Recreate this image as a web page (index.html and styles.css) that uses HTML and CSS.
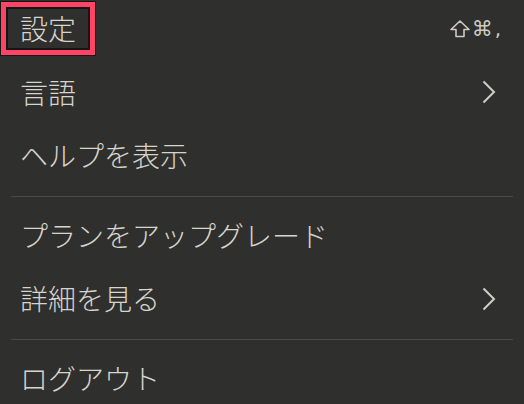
FILE: index.html
```html
<!DOCTYPE html>
<html lang="ja">
<head>
  <meta charset="UTF-8" />
  <title>メニュー</title>
  <link rel="stylesheet" href="styles.css">
</head>
<body>
  <ul class="menu">
    <li class="item">
      <span class="label focused">設定</span>
      <span class="shortcut">
        <svg class="shift" width="20" height="18" viewBox="0 0 20 18"><path d="M10 1 L19 9.5 L14 9.5 L14 16.5 L6 16.5 L6 9.5 L1 9.5 Z" fill="none" stroke="#cdcbc4" stroke-width="1.6" stroke-linejoin="round"/></svg>
        <span class="cmd">⌘</span><span class="comma">,</span>
      </span>
    </li>
    <li class="item">
      <span class="label">言語</span>
      <svg class="chevron" width="14" height="24" viewBox="0 0 14 24"><path d="M1.5 1.5 L12 12 L1.5 22.5" fill="none" stroke="#cfcdc6" stroke-width="2"/></svg>
    </li>
    <li class="item">
      <span class="label">ヘルプを表示</span>
    </li>
    <li class="divider"></li>
    <li class="item">
      <span class="label">プランをアップグレード</span>
    </li>
    <li class="item">
      <span class="label">詳細を見る</span>
      <svg class="chevron" width="14" height="24" viewBox="0 0 14 24"><path d="M1.5 1.5 L12 12 L1.5 22.5" fill="none" stroke="#cfcdc6" stroke-width="2"/></svg>
    </li>
    <li class="divider"></li>
    <li class="item">
      <span class="label">ログアウト</span>
    </li>
  </ul>
</body>
</html>
```

FILE: styles.css
```css
body {
  font-family: "Noto Sans CJK JP", "Noto Sans", sans-serif;
  background-color: #2f2f2d;
  color: #d6d4cd;
  margin: 0;
  padding: 0;
  overflow: hidden;
}
.menu {
  list-style: none;
  margin: -3px 0 0 0;
  padding: 0;
}
.item {
  display: flex;
  justify-content: space-between;
  align-items: center;
  height: 63.5px;
  padding: 0 28px 0 8px;
}
.label {
  font-size: 28px;
  font-weight: 300;
  line-height: 31px;
  padding: 4px 12px;
}
.label.focused {
  box-shadow: 0 0 0 2px #161616, 0 0 0 7px #ff4466, 0 0 0 8px #161616;
}
.shortcut {
  display: flex;
  align-items: center;
  margin-right: -5px;
  color: #cdcbc4;
  font-family: "DejaVu Sans", sans-serif;
}
.shift {
  display: block;
  margin-right: 2px;
}
.cmd {
  font-size: 21px;
  line-height: 24px;
}
.comma {
  font-size: 20px;
  line-height: 24px;
  margin-left: 2px;
}
.chevron {
  display: block;
}
.divider {
  height: 1px;
  margin: 8px 11px 7px;
  background-color: #4a4a48;
}
```
